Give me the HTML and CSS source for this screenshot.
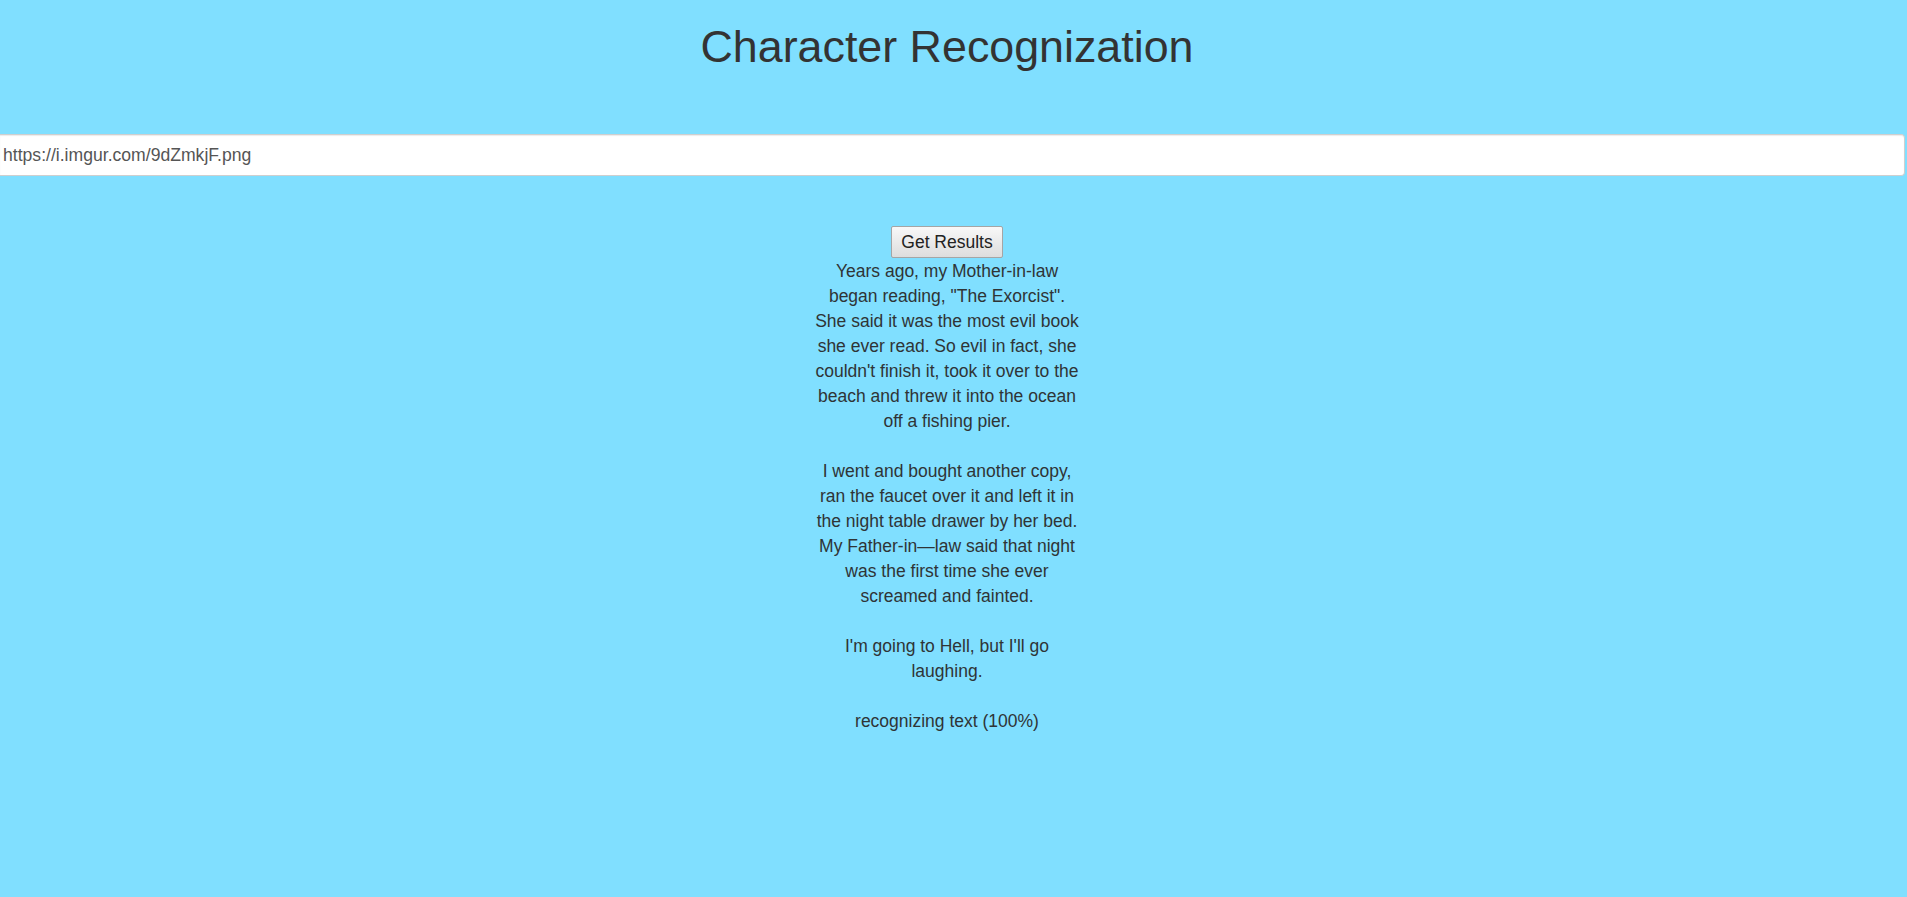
FILE: index.html
```html
<!DOCTYPE html>
<html lang="en">
<head>
<meta charset="utf-8">
<title>Character Recognization</title>
<link rel="stylesheet" href="styles.css">
</head>
<body>
<header class="header">
  <h1 class="title">Character Recognization</h1>
</header>
<div class="url-row">
  <input class="url-input" type="text" value="https://i.imgur.com/9dZmkjF.png">
</div>
<main class="content">
  <button class="get-btn" type="button">Get Results</button>
  <div class="result">Years ago, my Mother-in-law began reading, "The Exorcist". She said it was the most evil book she ever read. So evil in fact, she couldn't finish it, took it over to the beach and threw it into the ocean off a fishing pier.<br><br>I went and bought another copy, ran the faucet over it and left it in the night table drawer by her bed. My Father-in—law said that night was the first time she ever screamed and fainted.<br><br>I'm going to Hell, but I'll go laughing.<br><br>recognizing text (100%)</div>
</main>
</body>
</html>
```
FILE: styles.css
```css
html, body {
  margin: 0;
  padding: 0;
}
body {
  background: #80dfff;
  color: #2f3436;
  font-family: "Liberation Sans", Arial, sans-serif;
  font-size: 17.5px;
  line-height: 25px;
  min-height: 897px;
}
.header {
  padding: 20px 13px 0 0;
  text-align: center;
}
.title {
  margin: 0;
  font-size: 44.8px;
  font-weight: normal;
  line-height: 53px;
  color: #333333;
}
.url-row {
  padding-top: 61px;
  padding-right: 2px;
}
.url-input {
  display: block;
  box-sizing: border-box;
  width: 100%;
  height: 42px;
  margin: 0;
  padding: 0 3px;
  border: 1px solid #cfcfcf;
  border-left-width: 0;
  border-radius: 0 4px 4px 0;
  background: #ffffff;
  box-shadow: inset 0 1px 1px rgba(0, 0, 0, 0.08);
  font-family: "Liberation Sans", Arial, sans-serif;
  font-size: 17.6px;
  color: #555555;
  outline: none;
}
.content {
  padding: 50px 13px 0 0;
  display: flex;
  flex-direction: column;
  align-items: center;
}
.get-btn {
  box-sizing: border-box;
  height: 32px;
  width: 112px;
  margin: 0 0 1px 0;
  padding: 0;
  border: 1px solid #a5a5a5;
  border-radius: 2px;
  background: linear-gradient(#f8f8f8, #dddddd);
  font-family: "Liberation Sans", Arial, sans-serif;
  font-size: 17.5px;
  color: #222222;
}
.result {
  width: 266px;
  text-align: center;
}
```
